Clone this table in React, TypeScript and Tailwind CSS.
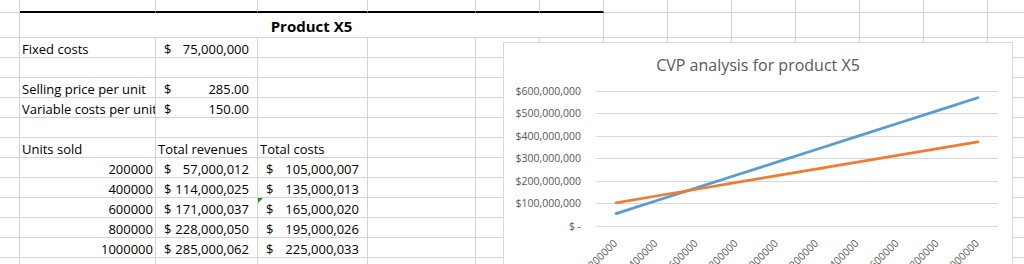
import type { ReactNode } from "react";

// column widths of the sheet (A is the partial one on the left)
const COLS = [
  "w-[20px]",
  "w-[136px]",
  "w-[102px]",
  "w-[110px]",
  "w-[108px]",
  "w-16",
  "w-16",
  "w-16",
  "w-16",
  "w-16",
  "w-16",
  "w-16",
  "w-16",
  "w-16",
];

const units = [200000, 400000, 600000, 800000, 1000000];
const revenues = ["57,000,012", "114,000,025", "171,000,037", "228,000,050", "285,000,062"];
const costs = ["105,000,007", "135,000,013", "165,000,020", "195,000,026", "225,000,033"];

function Cell({ w, className = "", children }: { w: string; className?: string; children?: ReactNode }) {
  return (
    <div
      className={`relative flex shrink-0 items-end overflow-hidden whitespace-nowrap border-r border-b border-[#d4d4d4] ${w} ${className}`}
    >
      {children}
    </div>
  );
}

function Acct({ value }: { value: string }) {
  return (
    <div className="flex w-full justify-between pl-2 pr-2">
      <span>$</span>
      <span>{value}</span>
    </div>
  );
}

function Row({ h, cells }: { h: string; cells: Record<number, ReactNode> }) {
  return (
    <div className={`flex ${h}`}>
      {COLS.map((w, i) => (
        <Cell key={i} w={w}>
          {cells[i]}
        </Cell>
      ))}
    </div>
  );
}

function Chart() {
  const cats = ["200000", "400000", "600000", "800000", "1000000", "1200000", "1400000", "1600000", "1800000", "2000000"];
  const rev = cats.map((_, i) => 57 * (i + 1));
  const cost = cats.map((_, i) => 75 + 30 * (i + 1));
  const yOf = (m: number) => 151.5 - m * (135.5 / 600);
  const xOf = (i: number) => 112 + i * 40.2;
  const ticks = ["$ -", "$100,000,000", "$200,000,000", "$300,000,000", "$400,000,000", "$500,000,000", "$600,000,000"];
  const pts = (vals: number[]) => vals.map((v, i) => `${xOf(i)},${yOf(v)}`).join(" ");

  return (
    <div className="absolute left-[503px] top-[42px] h-[240px] w-[510px] border border-[#d9d9d9] bg-white">
      <div className="pt-3 text-center font-['Open_Sans'] text-[16px] leading-5 text-[#595959]">
        CVP analysis for product X5
      </div>
      <svg width="508" height="200" className="block">
        {ticks.map((t, k) => {
          const y = Math.round(151 - 22.58 * k) + 0.5;
          return (
            <g key={t}>
              <line x1="92" x2="494" y1={y} y2={y} stroke="#d9d9d9" strokeWidth="1" />
              <text
                x="77"
                y={y + 3.5}
                textAnchor="end"
                fontFamily="Open Sans"
                fontSize="10.5"
                fill="#595959"
                xmlSpace="preserve"
              >
                {t}
              </text>
            </g>
          );
        })}
        <polyline points={pts(rev)} fill="none" stroke="#5b9bd5" strokeWidth="2.75" strokeLinecap="round" strokeLinejoin="round" />
        <polyline points={pts(cost)} fill="none" stroke="#ed7d31" strokeWidth="2.75" strokeLinecap="round" strokeLinejoin="round" />
        {cats.map((c, i) => (
          <text
            key={c}
            x={xOf(i) + 2}
            y="169"
            textAnchor="end"
            fontFamily="Open Sans"
            fontSize="10.5"
            fill="#595959"
            transform={`rotate(-45 ${xOf(i) + 2} 169)`}
          >
            {c}
          </text>
        ))}
      </svg>
    </div>
  );
}

export default function App() {
  return (
    <div className="relative h-[264px] w-[1024px] overflow-hidden bg-white font-['Open_Sans'] text-[13px] leading-[15px] text-black">
      {/* top partial row, thick border over the merged title */}
      <div className="flex h-[13px]">
        {COLS.map((w, i) => (
          <Cell key={i} w={w} className={i >= 1 && i <= 6 ? "border-b-2 border-b-black" : ""} />
        ))}
      </div>

      {/* merged title row */}
      <div className="flex h-[25px]">
        <Cell w={COLS[0]} />
        <Cell w="w-[584px]" className="justify-center pb-[2px] text-[15px] font-bold leading-[18px]">
          Product X5
        </Cell>
        {COLS.slice(7).map((w, i) => (
          <Cell key={i} w={w} />
        ))}
      </div>

      <Row h="h-5" cells={{ 1: <span className="pl-[2px]">Fixed costs</span>, 2: <Acct value="75,000,000" /> }} />
      <Row h="h-5" cells={{}} />
      <Row
        h="h-5"
        cells={{ 1: <span className="pl-[2px]">Selling price per unit</span>, 2: <Acct value="285.00" /> }}
      />
      <Row
        h="h-5"
        cells={{ 1: <span className="pl-[2px]">Variable costs per unit</span>, 2: <Acct value="150.00" /> }}
      />
      <Row h="h-5" cells={{}} />
      <Row
        h="h-5"
        cells={{
          1: <span className="pl-[2px]">Units sold</span>,
          2: <span className="pl-[2px]">Total revenues</span>,
          3: <span className="pl-[2px]">Total costs</span>,
        }}
      />
      {units.map((u, r) => (
        <Row
          key={u}
          h="h-5"
          cells={{
            1: <span className="w-full pr-[2px] text-right">{u}</span>,
            2: <Acct value={revenues[r]} />,
            3: (
              <>
                {r === 2 && (
                  <span className="absolute left-0 top-0 h-0 w-0 border-t-[5px] border-r-[5px] border-t-[#1a8f1a] border-r-transparent" />
                )}
                <Acct value={costs[r]} />
              </>
            ),
          }}
        />
      ))}
      <Row h="h-5" cells={{ 2: <Acct value="" />, 3: <Acct value="" /> }} />

      <Chart />
    </div>
  );
}
